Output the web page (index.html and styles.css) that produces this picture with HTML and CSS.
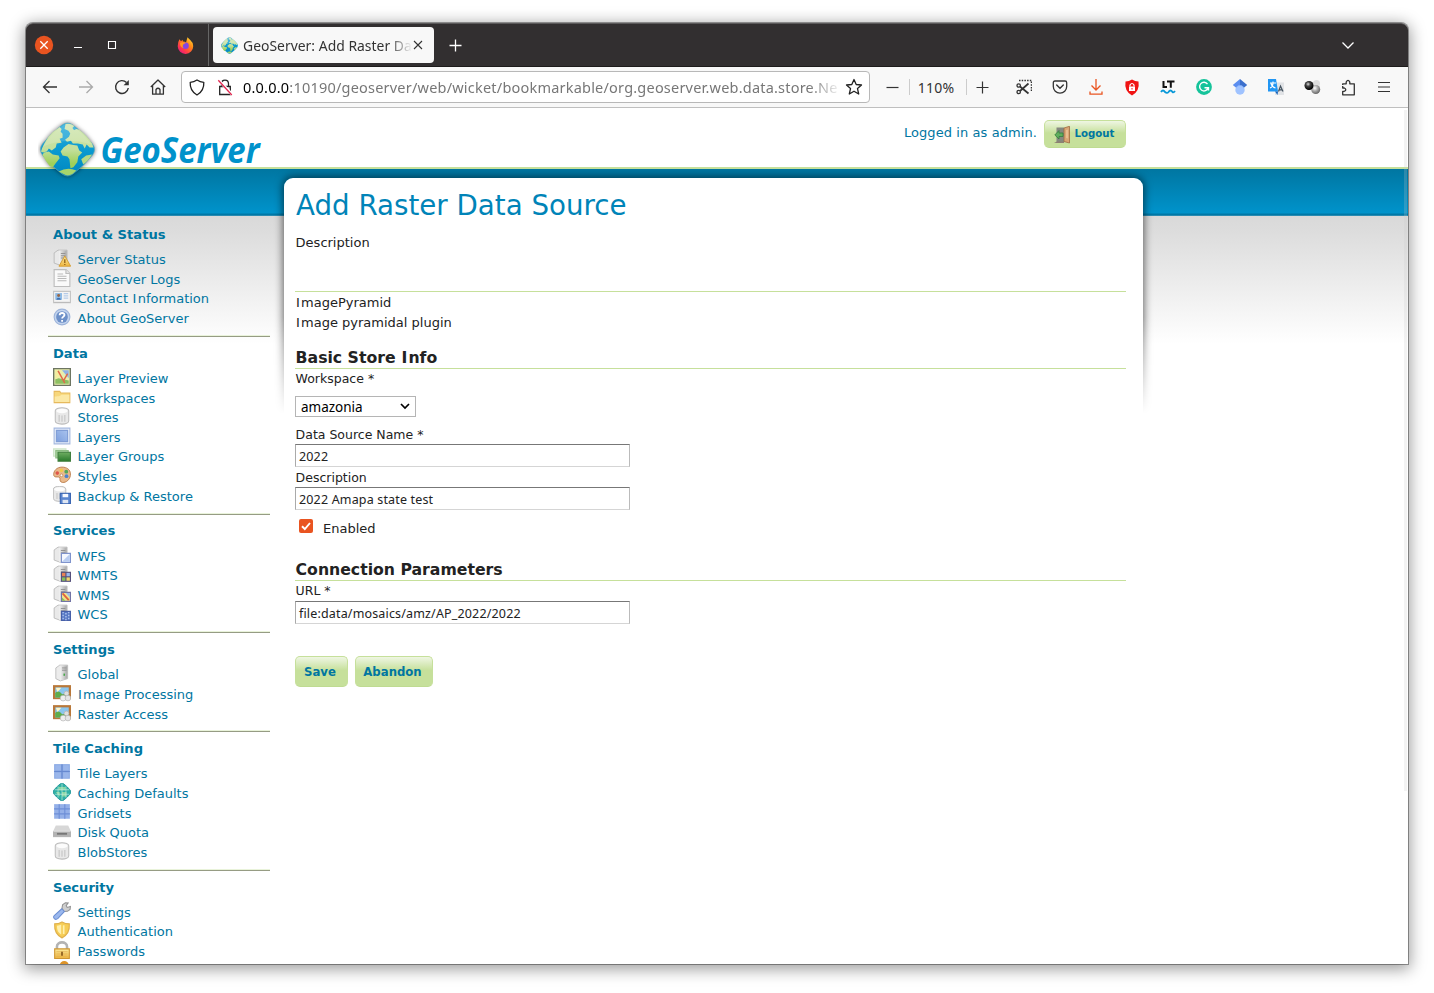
FILE: index.html
```html
<!DOCTYPE html>
<html lang="en">
<head>
<meta charset="utf-8">
<title>GeoServer: Add Raster Data Source</title>
<link rel="stylesheet" href="styles.css">
</head>
<body>
<svg class="defs" width="0" height="0">
  <defs>
    <linearGradient id="gServer" x1="0" x2="1"><stop offset="0" stop-color="#f2f2f2"/><stop offset="1" stop-color="#a8a8a8"/></linearGradient>
    <linearGradient id="gBlue" x1="0" x2="1" y1="1" y2="0"><stop offset="0" stop-color="#7d9fde"/><stop offset="1" stop-color="#a9c3ee"/></linearGradient>
    <linearGradient id="gGold" x2="0" y2="1"><stop offset="0" stop-color="#fdeb9c"/><stop offset="1" stop-color="#edb541"/></linearGradient>
    <linearGradient id="gGreen" x2="0" y2="1"><stop offset="0" stop-color="#6fae62"/><stop offset="1" stop-color="#2a7a2c"/></linearGradient>
    <linearGradient id="gFire" x1="1" y1="0" x2="0.2" y2="1"><stop offset="0" stop-color="#fff03f"/><stop offset=".4" stop-color="#ff8a16"/><stop offset=".75" stop-color="#ff3b47"/><stop offset="1" stop-color="#e31587"/></linearGradient>
    <linearGradient id="gLogo" x1="0" y1="0" x2="0" y2="1"><stop offset="0" stop-color="#35b0dc"/><stop offset=".5" stop-color="#0a9ad1"/><stop offset="1" stop-color="#0087c0"/></linearGradient>
    <linearGradient id="gLand" gradientUnits="userSpaceOnUse" x1="0" y1="0" x2="0" y2="56"><stop offset="0" stop-color="#d3e6b4"/><stop offset=".5" stop-color="#c3df9b"/><stop offset=".75" stop-color="#9fd05a"/></linearGradient>
    <radialGradient id="gBall1" cx=".4" cy=".35" r=".6"><stop offset="0" stop-color="#ddd"/><stop offset=".4" stop-color="#444"/><stop offset="1" stop-color="#000"/></radialGradient>
    <radialGradient id="gBall2" cx=".4" cy=".35" r=".65"><stop offset="0" stop-color="#fff"/><stop offset=".5" stop-color="#aaa"/><stop offset="1" stop-color="#666"/></radialGradient>
  </defs>
  <symbol id="server" viewBox="0 0 16 16"><path d="M1 3.500 4.500 1h8v11l-6 2.500-5.500-2z" fill="#e9e9e9" stroke="#b9b9b9" stroke-width=".8"/><path d="M5.500 1.400h6.700v11l-6.700 1.800z" fill="url(#gServer)"/><path d="M7 4h4M7 6h4M7 8h4" stroke="#8d8d8d" stroke-width=".8"/></symbol>
  <symbol id="db" viewBox="0 0 16 16"><path d="M2 3.300v9C2 16.200 14 16.200 14 12.300v-9C14-.3 2-.3 2 3.300z" fill="#e8e8e8" stroke="#bcbcbc" stroke-width=".9"/><ellipse cx="8" cy="3.500" rx="5" ry="2" fill="#fcfcfc"/><path d="M5.500 7v6M8 7.500V13M10.500 7v6" stroke="#cdcdcd" stroke-width="1.300"/></symbol>
  <symbol id="i-status" viewBox="0 0 16 16"><use href="#server"/><path d="M10.500 6.200 15.700 15.300H5.300z" fill="url(#gGold)" stroke="#d49b2e" stroke-width=".8" stroke-linejoin="round"/><path d="M10.500 9v3.500M10.500 13.300v1" stroke="#8d5a10" stroke-width="1.100"/></symbol>
  <symbol id="i-logs" viewBox="0 0 16 16"><path d="M1 .5h10.500L15 4v11.500H1z" fill="#fafafa" stroke="#bdbdbd"/><path d="M11.500.5V4H15" fill="#e5e5e5" stroke="#bdbdbd"/><path d="M4 4.500h5M4 6.500h8M4 8.500h8M4 10.500h8" stroke="#b9b9b9" stroke-width=".9"/></symbol>
  <symbol id="i-contact" viewBox="0 0 16 16"><path d="M.5 3h15v10H.5z" fill="#f4f4f4" stroke="#c5c5c5"/><path d="M2 4.500h6v6H2z" fill="#8fbbe6"/><circle cx="5" cy="6.700" r="1.300" fill="#9a6745"/><path d="M3 10.500C3 8 7 8 7 10.500z" fill="#3f70b0"/><path d="M9.500 5h4M9.500 7h4M9.500 9h4" stroke="#b5cbe8"/><path d="M1 12.800h14" stroke="#bbb"/></symbol>
  <symbol id="i-about" viewBox="0 0 16 16"><circle cx="8" cy="8" r="7" fill="#c3d4ee" stroke="#9db4da"/><circle cx="8" cy="8" r="5.200" fill="#6d90c8"/><path d="M5.900 6.400c.1-2.700 4.400-2.500 4.300-.1C10.200 7.700 8.100 7.700 8.100 9.400M8.100 10.700v1.500" fill="none" stroke="#fff" stroke-width="1.600"/></symbol>
  <symbol id="i-preview" viewBox="0 0 16 16"><path d="M.6.600h14.800v14.800H.6z" fill="#e8efae" stroke="#6d7562" stroke-width="1.200"/><path d="M8 2h6v7z" fill="#8fb1e6"/><path d="M2 10l3-1 9 2v3H2z" fill="#8dbf63"/><path d="M2 2h5l-1 6-4 2z" fill="#f3eda0"/><path d="M4.500 2.500 10.500 13.500M13 5 9.500 11" stroke="#e0694a" stroke-width="1.300"/></symbol>
  <symbol id="i-folder" viewBox="0 0 16 16"><path d="M1 3h5l1 1.500h8v8.500H1z" fill="#f7d77b" stroke="#e6b95d" stroke-width=".9"/><path d="M1.500 7.500c4 0 5-.7 6-1.500h7v6.500h-13z" fill="#fbe8a5"/></symbol>
  <symbol id="i-layer" viewBox="0 0 16 16"><path d="M1 1h14v14H1z" fill="#eaf0fb" stroke="#a5b9df"/><path d="M3 3h10v10H3z" fill="url(#gBlue)" stroke="#7f9dd6"/></symbol>
  <symbol id="i-groups" viewBox="0 0 16 16"><path d="M.5 2.500h11V9H.5z" fill="#e3f3df" stroke="#cfe6ca"/><path d="M2.500 4h11v6.500h-11z" fill="#a9d29f" stroke="#8dbd84"/><path d="M4.500 5.500h11v8h-11z" fill="url(#gGreen)" stroke="#417f3f"/></symbol>
  <symbol id="i-styles" viewBox="0 0 16 16"><path d="M8 1C3 1 .6 4.600.6 7.500c0 2 1.400 2.400 3 2.200 2.400-.2 2.700.8 2.600 2.300C6.100 14 7.800 15 9.700 14.600 13 14 15.600 11 15.500 7 15.400 3 12 1 8 1z" fill="#e9b98c" stroke="#b97b48" stroke-width=".8"/><circle cx="3.800" cy="6.300" r="1.600" fill="#e0564a"/><circle cx="7.500" cy="3.900" r="1.600" fill="#f2c94b"/><circle cx="11.800" cy="5" r="1.700" fill="#52a85a"/><circle cx="12" cy="9" r="1.700" fill="#4c82cf"/><circle cx="7.500" cy="8.300" r="1.200" fill="#fff" stroke="#b97b48" stroke-width=".6"/></symbol>
  <symbol id="i-backup" viewBox="0 0 16 16"><g transform="translate(-1.500 -.3) scale(.92)"><use href="#db" width="16" height="16"/></g><path d="M6.500 6.500h9v9h-9z" fill="#5b86d0" stroke="#3b66b3"/><path d="M8.500 7h5v3h-5z" fill="#f6f9ff"/><path d="M8.500 12.300h5v3h-5z" fill="#dfe6f2"/></symbol>
  <symbol id="i-wfs" viewBox="0 0 16 16"><use href="#server"/><path d="M7.500 6.500h8v8h-8z" fill="#f4f8ff" stroke="#7f93cc"/><path d="M15 7v7H8z" fill="#b8ccf1"/></symbol>
  <symbol id="i-wmts" viewBox="0 0 16 16"><use href="#server"/><path d="M7 6h9v9H7z" fill="#55507c"/><path d="M8 7h3v3H8z" fill="#e88154"/><path d="M12 7h3v3h-3z" fill="#9ab8ed"/><path d="M8 11h3v3H8z" fill="#86bd58"/><path d="M12 11h3v3h-3z" fill="#f0d76b"/></symbol>
  <symbol id="i-wms" viewBox="0 0 16 16"><use href="#server"/><path d="M7.500 6.500h8v8h-8z" fill="#f0e38a" stroke="#7274a5"/><path d="M11.500 7H15v4z" fill="#9ab8ed"/><path d="M8 11l3 3H8z" fill="#86bd58"/><path d="m8.500 7.500 5.500 6" stroke="#e2603b" stroke-width="1.600"/></symbol>
  <symbol id="i-wcs" viewBox="0 0 16 16"><use href="#server"/><path d="M7.500 6.500h8v8h-8z" fill="#5879c4" stroke="#4760a9"/><path d="M9 7v7M11.500 8v7M14 7v7" stroke="#b6caf3" stroke-width="1.200" stroke-dasharray="1.300 1.300"/></symbol>
  <symbol id="i-global" viewBox="0 0 16 16"><path d="M2.500 3.500 6 1h7v12l-6.500 2-4-2z" fill="#ececec" stroke="#bcbcbc" stroke-width=".8"/><path d="M6.500 1.400h6.200v11.400l-6.200 1.800z" fill="url(#gServer)"/><path d="M8 3.500h4M8 5.500h4" stroke="#8d8d8d" stroke-width=".8"/><path d="M10 8.500v2" stroke="#48a84b" stroke-width="1.400"/></symbol>
  <symbol id="i-image" viewBox="0 0 16 16"><path d="M0 1h16v12.500H0z" fill="#b9783a"/><path d="M2 3h12v9H2z" fill="#8bc6ee"/><path d="M2 8c3-3 5 0 6 1l6-1v4H2z" fill="#5fad4b"/><path d="M2.500 3.300h5L4 7z" fill="#fff6c7"/><circle cx="12" cy="8.500" r="2.200" fill="#dedede" stroke="#aaa" stroke-width=".5"/><circle cx="9" cy="12.500" r="2.600" fill="#eee" stroke="#aaa" stroke-width=".5"/><circle cx="13.300" cy="12.500" r="2.500" fill="#e4e4e4" stroke="#aaa" stroke-width=".5"/></symbol>
  <symbol id="i-tiles" viewBox="0 0 16 16"><path d="M1 1h14v13H1z" fill="#89a8e4"/><path d="M8 1v13M1 7.500h14" stroke="#6689d0" stroke-width="1"/><path d="M2 2h5v4.500H2zM9 2h5v4.500H9zM2 8.500h5V13H2zM9 8.500h5V13H9z" fill="#9ab6ea"/></symbol>
  <symbol id="i-cache" viewBox="0 0 16 16"><path d="M6.500.7q1.500-1 3 0Q13 3.500 15.400 6.500q.9 1.500 0 3-2.400 3-5.900 5.800-1.500 1-3 0Q3 12.500.6 9.500q-.9-1.500 0-3Q3 3.500 6.500.7z" fill="#2fb0a5" stroke="#168f92" stroke-width=".7"/><path d="M5 3.500h6v3H5zM2.500 8H6v4zM8 8h4v4H8z" fill="#8bd6a2"/><path d="M4.500 3v10M8 .5v15M11.500 3v10M1.500 6h13M1.500 10h13" stroke="#c5ecdd" stroke-width=".6"/></symbol>
  <symbol id="i-grid" viewBox="0 0 16 16"><path d="M1 1h14v13H1z" fill="#94b0e8"/><path d="M5.500 1v13M10.500 1v13M1 5.200h14M1 9.700h14" stroke="#6d8ed6" stroke-width="1"/></symbol>
  <symbol id="i-disk" viewBox="0 0 16 16"><path d="M2.500 3h11L16 8.500v5H0v-5z" fill="#d7d7d7"/><path d="M0 8h16v5.300H0z" fill="#b3b3b3"/><path d="M3.500 10.500h9" stroke="#777" stroke-width="1.600"/><path d="M.3 8.200h15.400" stroke="#eee" stroke-width=".7"/></symbol>
  <symbol id="i-wrench" viewBox="0 0 16 16"><path d="m8 5.500.5-3L11 .6l2.500.2-1.800 2.400.9 1.700 2.900-.9-.3 2.600-2.400 1.700-3 .2z" fill="#cfcfcf" stroke="#929292" stroke-width=".9"/><path d="m7.800 6 2.400 2.400-6 6.400c-2.300 1.700-4.700-.8-3.100-2.800z" fill="#9bb8ee" stroke="#6b8ed2" stroke-width=".9"/></symbol>
  <symbol id="i-shield" viewBox="0 0 16 16"><path d="M1.500 2.500Q5 2.500 8 .8q3 1.700 6.500 1.700C15 9 12 13 8 15 4 13 1 9 1.500 2.500z" fill="#f6cd55" stroke="#dfb04c"/><path d="M3.500 4.200Q6 4 7.300 3.200V12C4.500 10 3.500 8 3.500 4.200z" fill="#fff0ae"/><path d="M9.500 3.800v7.700" stroke="#fff0ae" stroke-width="1.500"/></symbol>
  <symbol id="i-lock" viewBox="0 0 16 16"><path d="M3.500 8V5c0-5 9-5 9 0v3" fill="none" stroke="#b3b3b3" stroke-width="2.300"/><path d="M1.500 7h13v8.500h-13z" fill="url(#gGold)" stroke="#ce9633"/><path d="M3 9.500h10M3 11.500h10M3 13.500h10" stroke="#dca445" stroke-width=".5"/><path d="M8 9.500V13" stroke="#89591c" stroke-width="1.500"/></symbol>
  <symbol id="i-user" viewBox="0 0 16 16"><circle cx="10" cy="4" r="4" fill="#dd9326"/></symbol>
  <symbol id="geo" viewBox="0 0 56 56">
    <path d="M22.500 3q5.500-4 11 0 11.500 8.500 20 19.500 4 5.500 0 11-8.500 11-20 19.500-5.500 4-11 0Q11 44.500 2.500 33.500q-4-5.500 0-11Q11 11.500 22.500 3z" fill="url(#gLogo)" stroke="#62a9bd" stroke-width=".6"/>
    <path d="M9 14.500q4-5 11-9.500l2 2-1 3 2 2 0 4-3 1 2 4-5 1-1 4-4 3-3-2-2 3-4 1-2-1q2-7 8-15.500z" fill="url(#gLand)"/>
    <path d="m4 31 5-1 4 3 6 1 1 3-4 5-3 4-3-1Q6 40 2.500 33.500z" fill="url(#gLand)"/>
    <path d="M26 2q5-1 9 2l-2 2 3 4-5 2-2-3-4-2z" fill="url(#gLand)"/>
    <path d="m37 7 3 1q8 6 13 14l1.500 4-4 0-3-3-2 4-2-4-5-1-5 0-2-3-4 1-2-2 4-3 2-5 4-2z" fill="url(#gLand)"/>
    <path d="m24 26 5-3.500 5 1 4 .5 2 5 3 2-4 4-1 6-4 5-3 1-1-9-2-3-5-1-2-4z" fill="url(#gLand)"/>
    <path d="M19 50.500q9-5 18-1l-4 3.500q-5 3-9 0z" fill="#a6d56b"/><path d="m42 38 5-4 6-1q-4 7-9 10z" fill="#b6d985"/>
    <path d="M22.500 4q5.500-4 11 0 11 8 19 19Q28 15 3 25 10 13 22.500 4z" fill="#fff" opacity=".15"/>
  </symbol>
</svg>

<div class="window">
  <header class="titlebar">
    <span class="cell"><svg width="20" height="20" viewBox="0 0 20 20"><circle cx="10" cy="10" r="9.200" fill="#e95420"/><path d="M6.300 6.300l7.400 7.400M13.700 6.300l-7.400 7.400" stroke="#fff" stroke-width="1.300"/></svg></span>
    <span class="cell"><svg width="10" height="10"><path d="M1 7.500h8" stroke="#fff"/></svg></span>
    <span class="cell"><svg width="10" height="10"><path d="M1.500 1.500h7v7h-7z" fill="none" stroke="#fff" stroke-width="1.100"/></svg></span>
    <span class="cell firefox"><svg width="17" height="17" viewBox="0 0 17 17"><path d="M2.500 2.300 4 4.200l1.500-1.500.5 1.800Q8 4.300 9 5.500L10.500.3Q12 2 13.200 3q3 2.500 3 6a7.700 7.700 0 0 1-15.500.300Q.7 5 2.500 2.300z" fill="url(#gFire)"/><circle cx="8.600" cy="8.800" r="3.200" fill="#8446e0"/><path d="M3 6q2-1.500 6 0-2 .7-3 1.800Q5 9.500 6.500 11 3 10.500 3 6z" fill="#ff9a1f"/></svg></span>
    <span class="tabline"></span>
    <div class="tab"><svg width="17" height="17"><use href="#geo"/></svg><span class="tabtext">GeoServer: Add Raster Da</span><svg class="tabclose" width="10" height="10"><path d="M1 1l8 8M9 1 1 9" stroke="#333" stroke-width="1.100"/></svg></div>
    <span class="cell newtab"><svg width="13" height="13"><path d="M6.500.5v12M.5 6.500h12" stroke="#fff" stroke-width="1.300"/></svg></span>
    <span class="cell alltabs"><svg width="14" height="9"><path d="M1.500 1.500 7 7l5.500-5.500" fill="none" stroke="#fff" stroke-width="1.300"/></svg></span>
  </header>

  <nav class="toolbar">
    <span class="tool"><svg width="16" height="16"><path d="M15 8H1.500M7.500 2l-6 6 6 6" fill="none" stroke="#333" stroke-width="1.300"/></svg></span>
    <span class="tool"><svg width="16" height="16"><path d="M1 8h13.500M8.500 2l6 6-6 6" fill="none" stroke="#aaa" stroke-width="1.300"/></svg></span>
    <span class="tool"><svg width="16" height="16"><path d="M14.300 9A6.400 6.400 0 1 1 12.500 3.500" fill="none" stroke="#333" stroke-width="1.400"/><path d="M14.800 1v5.200H9.600z" fill="#333"/></svg></span>
    <span class="tool home"><svg width="16" height="16"><path d="M.8 8 8 1l7.200 7M2.600 6.500v8.700h10.800V6.500M6 15v-4.500q2-2.500 4 0V15" fill="none" stroke="#333" stroke-width="1.300" stroke-linejoin="round"/></svg></span>
    <div class="urlbar">
      <svg width="16" height="17"><path d="M8 1Q11 3 14.800 3.300 15.300 12 8 16 .7 12 1.200 3.300 5 3 8 1z" fill="none" stroke="#222" stroke-width="1.300" stroke-linejoin="round"/></svg>
      <svg class="insecure" width="16" height="17"><path d="M4.500 7.500V4.800C4.500 0 11.500 0 11.500 4.800v2.700M2.700 7.500h10.600v8H2.700z" fill="none" stroke="#222" stroke-width="1.300"/><path d="M1.800 1.300 15.300 15.800" stroke="#fff" stroke-width="3"/><path d="M1.300 1.300 14.800 16" stroke="#e22850" stroke-width="1.300"/></svg>
      <span class="url"><b>0.0.0.0</b>:10190/geoserver/web/wicket/bookmarkable/org.geoserver.web.data.store.Ne</span>
      <svg width="18" height="18" viewBox="0 0 18 18"><path d="m9 1.500 2.200 5 5.300.5-4 3.600 1.200 5.400L9 13.200 4.300 16l1.200-5.400-4-3.600 5.300-.5z" fill="none" stroke="#222" stroke-width="1.300" stroke-linejoin="round"/></svg>
    </div>
    <span class="zoom minus"><svg width="13" height="13"><path d="M.5 6.500h12" stroke="#333" stroke-width="1.200"/></svg></span>
    <span class="zoom level">110%</span>
    <span class="zoom plus"><svg width="13" height="13"><path d="M.5 6.500h12M6.500.5v12" stroke="#333" stroke-width="1.200"/></svg></span>
    <div class="tools">
      <span class="tool"><svg width="16" height="16"><path d="M3 1.500h12.500v11" fill="none" stroke="#333" stroke-width="1.500" stroke-dasharray="1.500 1.200"/><circle cx="2.700" cy="6.500" r="1.700" fill="none" stroke="#333" stroke-width="1.300"/><circle cx="2.700" cy="13" r="1.700" fill="none" stroke="#333" stroke-width="1.300"/><path d="m4 7.500 8.500 7M4 12l8.500-7.500" stroke="#333" stroke-width="1.700"/></svg></span>
      <span class="tool"><svg width="16" height="16"><path d="M3 2h10q1.700 0 1.700 1.700v3.800A6.700 6.700 0 0 1 1.300 7.500V3.700Q1.300 2 3 2z" fill="none" stroke="#333" stroke-width="1.300"/><path d="m4.700 6 3.300 3.200L11.300 6" fill="none" stroke="#333" stroke-width="1.400" stroke-linecap="round"/></svg></span>
      <span class="tool"><svg width="16" height="16"><path d="M8 0v11M3.500 6.500 8 11l4.500-4.500M2 12.500v2.700h12v-2.700" fill="none" stroke="#e95420" stroke-width="1.300"/></svg></span>
      <span class="tool"><svg width="16" height="17"><path d="M8 .5q3 2 6.500 2Q16 12 8 16.500 0 12 1.500 2.500 5 2.500 8 .5z" fill="#f01414"/><path d="M5 7.500h6V12H5z" fill="#fff"/><path d="M6 7.500V6q2-3 4 0v1.500" fill="none" stroke="#fff" stroke-width="1.200"/><path d="M8 9v1.500" stroke="#f01414"/></svg></span>
      <span class="tool"><svg width="16" height="16"><path d="M3.500 2v6H7M7 2.500h7.500M10.800 2.500v6.300" fill="none" stroke="#111" stroke-width="2"/><path d="M1 13q2-3 4 0 2 1.800 3.500 0 2-3 4 0 1 1 2.500-1" fill="none" stroke="#0a99d8" stroke-width="1.800"/></svg></span>
      <span class="tool"><svg width="16" height="16"><circle cx="8" cy="8" r="7.900" fill="#15c39a"/><path d="M11.500 5.200A4.300 4.300 0 1 0 12 9M8.500 8.800h4v2.700" fill="none" stroke="#fff" stroke-width="1.400"/></svg></span>
      <span class="tool"><svg width="16" height="16"><path d="M8 0 .8 6 8 12z" fill="#5b8def"/><path d="m8 0 7.200 6L8 12z" fill="#3b6fcc"/><circle cx="8" cy="11" r="4.700" fill="#a0c3ff"/><path d="M3.800 8.900A4.700 4.700 0 0 1 12.200 8.900Q8 4.500 3.800 8.900z" fill="#76a7fa"/></svg></span>
      <span class="tool translate"><svg width="16" height="16"><path d="M7 3.500h9V16H7z" fill="#e1e3e6"/><path d="M0 0h8l2 12.500H0z" fill="#2196f3"/><path d="M7 12.500h3L9.500 16z" fill="#1464bd"/><path d="M2 4h6M5 2.500V4q0 4-3 5M3 4.500q1 3.500 4.500 4.500" fill="none" stroke="#fff" stroke-width="1.100"/><path d="m10.500 12.500 2-5.500 2.500 5.500M11.500 10.800h2.500" fill="none" stroke="#445360" stroke-width="1.200"/></svg></span>
      <span class="tool"><svg width="17" height="16"><circle cx="12.500" cy="4.500" r="3.500" fill="#ddd"/><circle cx="11.700" cy="10.500" r="4.500" fill="url(#gBall2)"/><circle cx="5" cy="6.500" r="4.500" fill="url(#gBall1)"/></svg></span>
      <span class="tool"><svg width="16" height="17"><path d="M2.700 6V4.800h3.500V3q1.800-3.400 3.600 0v1.800h4.500v11H2.700v-3.500h1.600q3-1.600 0-3.300H2.700V7" fill="none" stroke="#333" stroke-width="1.300" stroke-linejoin="round"/></svg></span>
      <span class="tool"><svg width="14" height="12"><path d="M1 1.500h12M1 6h12M1 10.500h12" stroke="#333" stroke-width="1.200"/></svg></span>
    </div>
  </nav>

  <div class="page">
    <div class="masthead">
      <a class="brand"><svg width="240" height="66" viewBox="0 0 240 66"><use class="globe" href="#geo" x="2" y="3" width="55" height="55"/><text x="62.500" y="43.500" textLength="159" lengthAdjust="spacingAndGlyphs">GeoServer</text></svg></a>
      <span class="login">Logged in as admin.</span>
      <button class="btn logout"><svg width="18" height="18" viewBox="0 0 18 18"><path d="M2.500 1.500H10V16H2.500z" fill="#85887f"/><path d="M3 15.500h7V17H0z" fill="#8d8172"/><path d="m10 2 5.500-1.700V17L10 15.500z" fill="#d9a674" stroke="#a06a40" stroke-width=".8"/><path d="m12 4 2-.5v9l-2-.5z" fill="#e8bd90"/><path d="M9 7H5V4.500L.8 9 5 13v-2.500h4z" fill="#5fae5c" stroke="#337e3d" stroke-width=".8"/></svg>Logout</button>
    </div>
    <div class="band"></div>
    <div class="body">
      <aside class="sidebar">
        <section><h3>About &amp; Status</h3><ul>
          <li><svg><use href="#i-status"/></svg>Server Status</li>
          <li><svg><use href="#i-logs"/></svg>GeoServer Logs</li>
          <li><svg><use href="#i-contact"/></svg><span>Contact <span class="wide">I</span>nformation</span></li>
          <li><svg><use href="#i-about"/></svg>About GeoServer</li></ul></section>
        <section><h3>Data</h3><ul>
          <li><svg><use href="#i-preview"/></svg>Layer Preview</li>
          <li><svg><use href="#i-folder"/></svg>Workspaces</li>
          <li><svg><use href="#db"/></svg>Stores</li>
          <li><svg><use href="#i-layer"/></svg>Layers</li>
          <li><svg><use href="#i-groups"/></svg>Layer Groups</li>
          <li><svg><use href="#i-styles"/></svg>Styles</li>
          <li><svg><use href="#i-backup"/></svg>Backup &amp; Restore</li></ul></section>
        <section><h3>Services</h3><ul>
          <li><svg><use href="#i-wfs"/></svg>WFS</li>
          <li><svg><use href="#i-wmts"/></svg>WMTS</li>
          <li><svg><use href="#i-wms"/></svg>WMS</li>
          <li><svg><use href="#i-wcs"/></svg>WCS</li></ul></section>
        <section><h3>Settings</h3><ul>
          <li><svg><use href="#i-global"/></svg>Global</li>
          <li><svg><use href="#i-image"/></svg><span><span class="wide">I</span>mage Processing</span></li>
          <li><svg><use href="#i-image"/></svg>Raster Access</li></ul></section>
        <section><h3>Tile Caching</h3><ul>
          <li><svg><use href="#i-tiles"/></svg>Tile Layers</li>
          <li><svg><use href="#i-cache"/></svg>Caching Defaults</li>
          <li><svg><use href="#i-grid"/></svg>Gridsets</li>
          <li><svg><use href="#i-disk"/></svg>Disk Quota</li>
          <li><svg><use href="#db"/></svg>BlobStores</li></ul></section>
        <section><h3>Security</h3><ul>
          <li><svg><use href="#i-wrench"/></svg>Settings</li>
          <li><svg><use href="#i-shield"/></svg>Authentication</li>
          <li><svg><use href="#i-lock"/></svg>Passwords</li>
          <li><svg><use href="#i-user"/></svg></li></ul></section>
      </aside>
      <main class="panel">
        <div class="shade"><div class="shade-shape"></div></div>
        <div class="content">
          <h1>Add Raster Data Source</h1>
          <p class="lead">Description</p>
          <div class="store-type"><p><span class="wide">I</span>magePyramid</p><p><span class="wide">I</span>mage pyramidal plugin</p></div>
          <h2>Basic Store <span class="wide">I</span>nfo</h2>
          <label>Workspace *</label>
          <div class="select">amazonia<svg width="10" height="7"><path d="m1 1 4 4 4-4" fill="none" stroke="#000" stroke-width="1.700"/></svg></div>
          <label class="after-select">Data Source Name *</label>
          <div class="input">2022</div>
          <label class="desc">Description</label>
          <div class="input">2022 Amapa state test</div>
          <div class="check"><svg width="14" height="14"><rect width="14" height="14" rx="2" fill="#e95420"/><path d="m3 7.300 2.800 2.700L11 4" fill="none" stroke="#fff" stroke-width="1.900"/></svg><span>Enabled</span></div>
          <h2 class="conn">Connection Parameters</h2>
          <label>URL *</label>
          <div class="input">file:data/mosaics/amz/AP_2022/2022</div>
          <div class="actions"><button class="btn save">Save</button><button class="btn abandon">Abandon</button></div>
        </div>
      </main>
      <div class="scrollbar"></div>
    </div>
  </div>
</div>
</body>
</html>
```

FILE: styles.css
```css
* { box-sizing: border-box; }
html, body { height: 100%; }
body { margin: 0; padding: 23px 26px 29px; background: #fff; overflow: hidden; }
h1, h2, h3, p, ul { margin: 0; padding: 0; font-weight: normal; }
svg { display: block; flex: none; }
.defs { position: absolute; }

.window {
  height: 941px; width: 1382px; display: flex; flex-direction: column;
  border-radius: 7px 7px 0 0;
  box-shadow: 0 0 0 1px rgba(0,0,0,.35), 0 3px 16px 2px rgba(0,0,0,.4);
}

/* Browser chrome */
.titlebar {
  height: 44px; flex: none; display: flex; align-items: center; padding: 0 43px 0 1px;
  background: #322f30; border-top: 1px solid #5b595a; border-bottom: 1px solid #1d1b1b;
  border-radius: 7px 7px 0 0;
  font-family: "Noto Sans", sans-serif;
}
.cell { width: 34px; flex: none; display: flex; justify-content: center; }
.firefox { margin-left: 40px; padding-right: 1px; }
.tabline { width: 1px; height: 42px; margin-left: 5px; background: #666; }
.tab {
  margin-left: 4px; width: 221px; height: 36px; display: flex; align-items: center;
  padding: 0 11px 0 8px; background: #f8f8f8; border-radius: 4px;
}
.tabtext {
  flex: none; width: 169px; margin: 0 1px 0 5px; white-space: nowrap;
  font-size: 13.900px; letter-spacing: .02px; color: #333;
  -webkit-mask-image: linear-gradient(90deg, #000 86%, transparent 100%);
  mask-image: linear-gradient(90deg, #000 86%, transparent 100%);
}
.newtab { margin-left: 4px; }
.alltabs { margin-left: auto; }

.toolbar {
  height: 41px; flex: none; display: flex; align-items: center; padding-left: 6px;
  background: #f8f8f8; border-bottom: 1px solid #bfbfbf;
  font-family: "Noto Sans", sans-serif;
}
.tool { width: 36px; flex: none; display: flex; justify-content: center; }
.home, .translate { padding-right: 1px; }
.urlbar {
  width: 689px; height: 32px; margin-left: 5px; padding: 0 6px 0 7px;
  display: flex; align-items: center;
  background: #fff; border: 1px solid #b8b8b8; border-radius: 4px;
}
.insecure { margin-left: 12px; }
.url {
  flex: 1; min-width: 0; margin: 0 6px 0 10px; white-space: nowrap;
  font-size: 14.500px; color: #777; letter-spacing: .21px;
  -webkit-mask-image: linear-gradient(90deg, #000 95%, transparent 100.500%);
  mask-image: linear-gradient(90deg, #000 95%, transparent 100.500%);
}
.url b { font-weight: normal; color: #000; }
.zoom { height: 16px; display: flex; align-items: center; justify-content: center; font-size: 14px; color: #333; }
.minus { width: 34px; margin-left: 5px; }
.level { width: 58px; padding-right: 4px; border: solid #ccc; border-width: 0 1px; letter-spacing: .2px; }
.plus { width: 30px; }
.tools { display: flex; align-items: center; margin-left: 9px; }

/* Web page */
.page {
  flex: 1; min-height: 0; overflow: hidden; position: relative;
  display: flex; flex-direction: column; background: #fff;
  font-family: "DejaVu Sans", Verdana, sans-serif; font-size: 13px; color: #222;
}
.wide { padding: 0 1.200px 0 .4px; }
.masthead { height: 61px; flex: none; display: flex; align-items: flex-start; border-bottom: 2px solid #c6e09b; }
.brand { margin: 11px auto 0 12px; height: 48px; position: relative; z-index: 2; }
.brand text { font: italic bold 35px "Open Sans", sans-serif; fill: #0092cb; }
.globe { filter: drop-shadow(0 0 2px rgba(0,0,0,.55)); }
.login { margin-top: 15px; line-height: 20px; letter-spacing: .08px; color: #0076a1; }
.btn {
  display: flex; align-items: center; justify-content: center; padding: 0;
  border: 1px solid #c6e09b; border-bottom-color: #bfdb92; border-radius: 5px;
  background: linear-gradient(#eff6e3, #c6e09b 46%);
  font: bold 11.700px "DejaVu Sans", Verdana, sans-serif; color: #0076a1;
}
.logout { width: 82px; height: 28px; margin: 12px 282px 0 7px; padding: 0 2px 2px 0; font-size: 10.200px; gap: 3px; }
.logout svg { margin-top: 3px; }
.band {
  height: 47px; flex: none;
  background: linear-gradient(#0076a1, #0093cb 44px, #0078a6 45px, #0078a6 46px, #4f9dbd);
}
.body {
  flex: 1; min-height: 0; display: flex; align-items: flex-start;
  background: linear-gradient(#d9d9d9, #dcdcdc 14px, #fff 128px);
}
.sidebar { width: 222px; margin-left: 22px; padding-top: 2.300px; }
.sidebar section { padding: 6.800px 5px 7.400px; border-bottom: 1px solid #969c84; box-shadow: inset 0 -1px #e9f3da; }
.sidebar h3 { height: 19.600px; line-height: 19.600px; margin-bottom: 5.600px; font-size: 13.100px; font-weight: bold; color: #0076a1; }
.sidebar ul { list-style: none; }
.sidebar li { height: 19.600px; line-height: 19.600px; display: flex; color: #0076a1; white-space: nowrap; }
.sidebar li svg { width: 18px; height: 18px; margin: -1px 6.500px 0 0; }

.panel { position: relative; width: 859px; margin: -38px 0 0 14px; }
.shade {
  position: absolute; left: -12px; right: -12px; top: -9px; height: 247px; overflow: hidden;
  -webkit-mask-image: linear-gradient(#000 60%, transparent 99%);
  mask-image: linear-gradient(#000 60%, transparent 99%);
}
.shade-shape { margin: 9px 12px 0; height: 300px; border-radius: 9px; box-shadow: 0 0 8px 1px rgba(0,0,0,.6); }
.content { position: relative; padding: 0 17px 0 11px; border-radius: 9px 9px 0 0; background: #fff; }
h1 { height: 54px; line-height: 56px; padding-left: 1px; font-size: 27.700px; color: #0084b8; white-space: nowrap; }
.lead { height: 20px; line-height: 20px; margin: 1px 0 38px; }
.lead, .store-type p, h2, label { text-indent: .6px; }
.store-type { border-top: 1px solid #c6e09b; padding-top: 1px; line-height: 20px; }
h2 { height: 23px; line-height: 24px; margin-top: 13px; border-bottom: 1px solid #c6e09b; font-size: 15.700px; font-weight: bold; }
label { display: block; height: 20px; line-height: 20px; font-size: 12.500px; }
.desc { line-height: 21px; }
.select {
  width: 121px; height: 21px; margin-top: 7px; padding: 0 5px; display: flex; align-items: center;
  justify-content: space-between; border: 1px solid #b5b5b5; font-size: 13.500px; color: #000;
  font-family: "Noto Sans", sans-serif;
}
.after-select { margin-top: 8px; height: 19px; line-height: 19px; }
.input {
  width: 335px; height: 23px; padding: 1px 3px 0; white-space: nowrap;
  border: 1px solid; border-color: #777 #bbb #d5d5d5 #aaa;
  font: 12.500px/21px "Noto Sans", sans-serif; letter-spacing: .16px;
}
.check { display: flex; height: 35px; padding: 9px 0 0 4px; }
.check span { margin-left: 10px; line-height: 20px; }
.conn { margin-top: 13px; }
.actions { display: flex; gap: 7px; margin-top: 32px; }
.save { width: 53px; height: 31px; padding-right: 3px; }
.abandon { width: 78px; height: 31px; padding-right: 3px; }
.scrollbar { position: absolute; right: 1px; top: 2px; width: 3px; height: 681px; background: rgba(200,200,200,.22); }
```
